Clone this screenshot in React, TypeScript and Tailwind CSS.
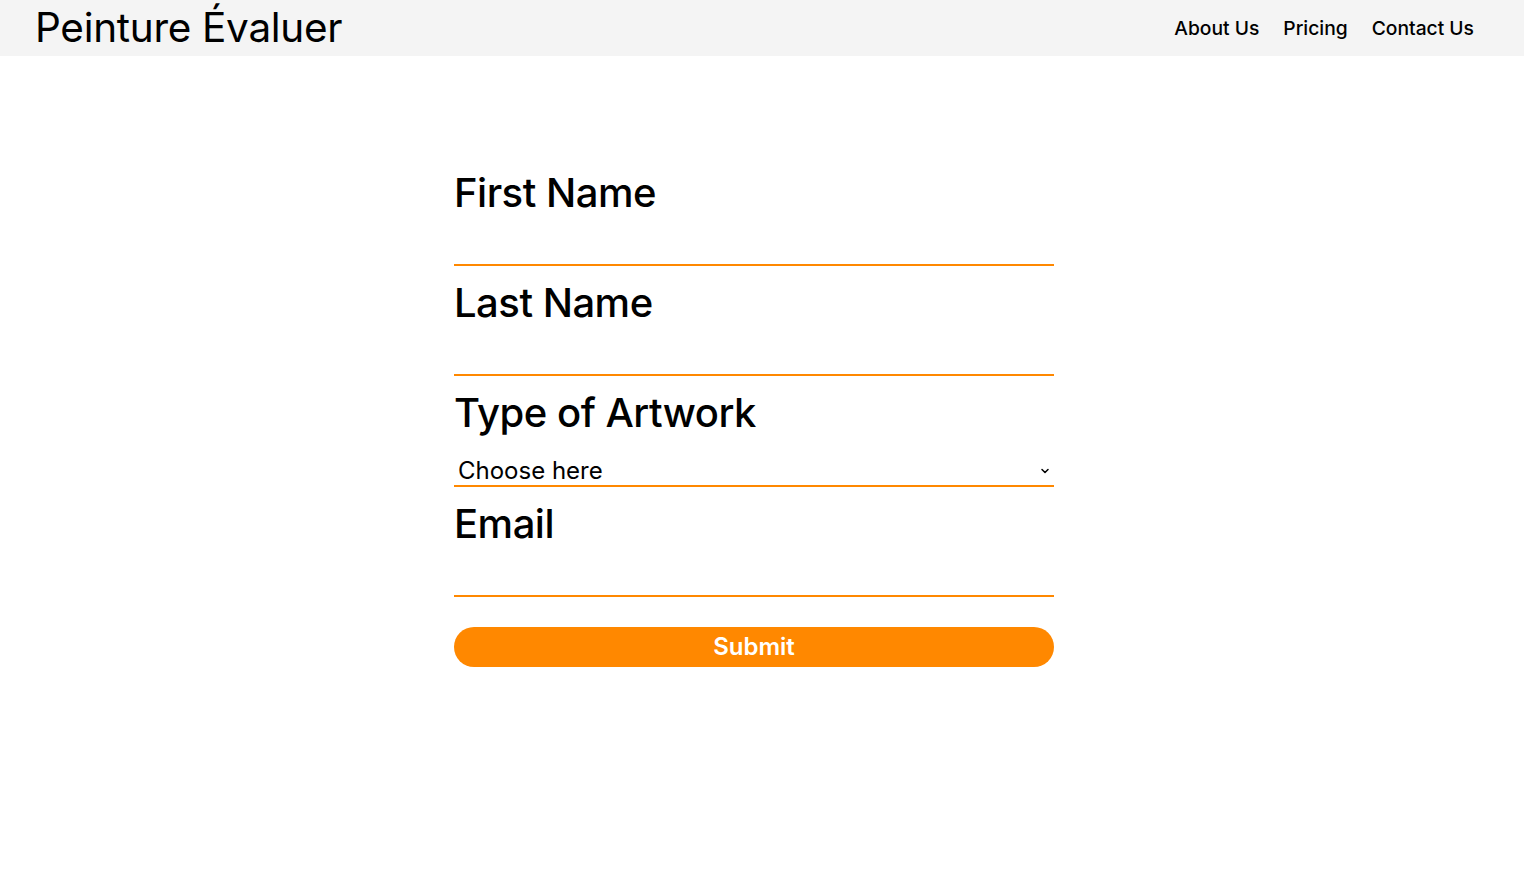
import { ChevronDown } from "lucide-react";

const font = { fontFamily: "Inter, 'Open Sans', sans-serif" };

function Field({ label }: { label: string }) {
  return (
    <div className="flex flex-col">
      <label className="mt-[7px] text-[40px] leading-[60px] font-medium text-black tracking-[-0.5px]">
        {label}
      </label>
      <input
        type="text"
        className="h-[43px] border-b-2 border-[#ff8800] outline-none px-1 text-2xl"
      />
    </div>
  );
}

export default function App() {
  return (
    <div className="min-h-screen bg-white text-black" style={font}>
      <header className="flex items-center justify-between h-14 bg-[#f4f4f4] pl-[35px] pr-[50px]">
        <span className="text-[40.5px] leading-none font-normal tracking-[-0.3px]">
          Peinture Évaluer
        </span>
        <nav className="flex items-center gap-6 text-[19.25px] font-medium">
          <a href="#">About Us</a>
          <a href="#">Pricing</a>
          <a href="#">Contact Us</a>
        </nav>
      </header>

      <main className="flex justify-center pr-4 pt-[100px]">
        <form className="w-[600px] flex flex-col" onSubmit={(e) => e.preventDefault()}>
          <Field label="First Name" />
          <Field label="Last Name" />
          <div className="flex flex-col">
            <label className="mt-[7px] text-[40px] leading-[60px] font-medium tracking-[-0.5px]">
              Type of Artwork
            </label>
            <div className="relative h-[44px] border-b-2 border-[#ff8800] flex items-end">
              <select className="appearance-none w-full bg-transparent outline-none text-2xl leading-none pl-1 pb-0 h-[28px]">
                <option>Choose here</option>
                <option>Painting</option>
                <option>Sculpture</option>
              </select>
              <ChevronDown
                className="absolute right-[3px] bottom-[8px] w-3 h-3 pointer-events-none"
                strokeWidth={3}
              />
            </div>
          </div>
          <Field label="Email" />
          <button
            type="submit"
            className="mt-[30px] h-10 rounded-full bg-[#ff8800] text-white text-2xl font-semibold"
          >
            Submit
          </button>
        </form>
      </main>
    </div>
  );
}
